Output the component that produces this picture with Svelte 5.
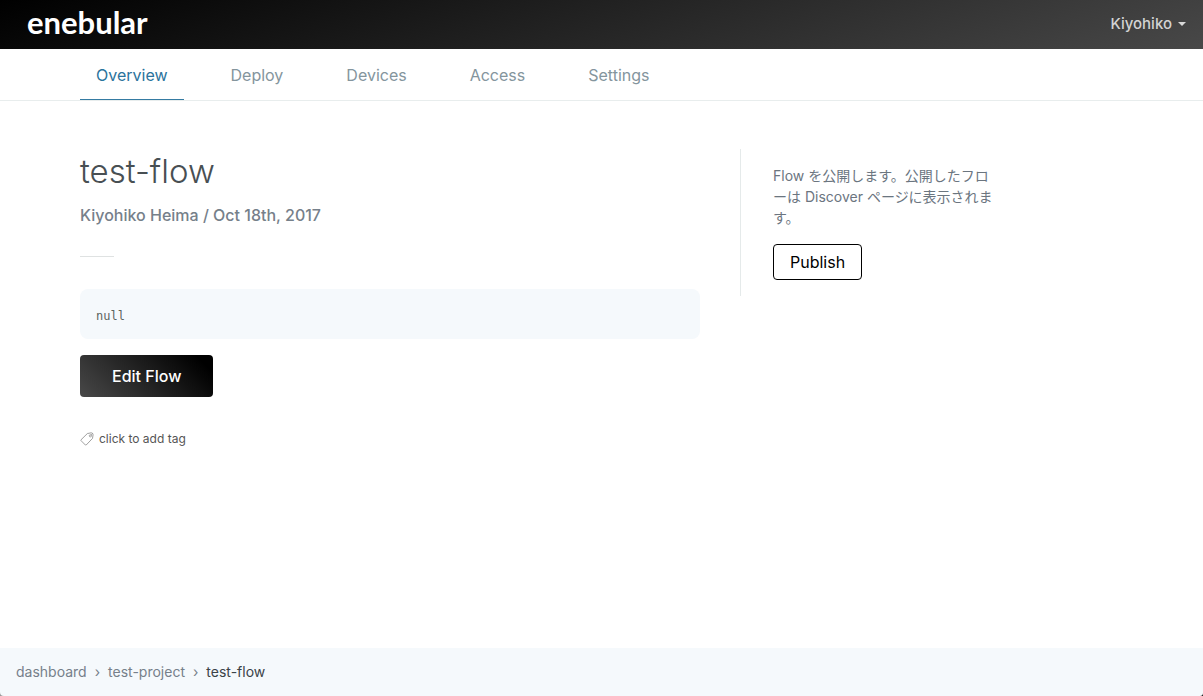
<script>
  const tabs = ['Overview', 'Deploy', 'Devices', 'Access', 'Settings'];
  let active = $state('Overview');
</script>

<div class="page">
  <header class="topbar">
    <a class="logo" href="#home">enebular</a>
    <button class="user" type="button">Kiyohiko <span class="caret"></span></button>
  </header>

  <nav class="tabs" aria-label="Project">
    {#each tabs as tab}
      <a
        href={'#' + tab.toLowerCase()}
        class:active={tab === active}
        onclick={() => (active = tab)}>{tab}</a>
    {/each}
  </nav>

  <main class="content">
    <section class="flow">
      <h1>test-flow</h1>
      <p class="meta">Kiyohiko Heima / Oct 18th, 2017</p>
      <hr />
      <pre>null</pre>
      <button class="edit" type="button">Edit Flow</button>
      <button class="tag" type="button">
        <svg viewBox="0 0 14 14" width="14" height="14" fill="none" stroke="currentColor" stroke-linejoin="round" aria-hidden="true">
          <path d="M7.3 1.6 11.2 .8 Q13 .9 13.1 2.7 L12.5 6.4 6.2 13 Q5.8 13.3 5.4 13 L1 8.6 Q.7 8.2 1 7.8Z" stroke-width=".8" />
          <circle cx="10.4" cy="3.8" r="1.1" stroke-width=".7" />
          <path d="M10.6 3.6 12.6 1.4" stroke-width=".7" />
        </svg>
        click to add tag
      </button>
    </section>

    <aside>
      <p lang="ja">Flow を公開します。公開したフローは Discover ページに表示されます。</p>
      <button class="publish" type="button">Publish</button>
    </aside>
  </main>

  <div class="bottom">
    <footer>
      <a href="#dashboard">dashboard</a>
      <span>›</span>
      <a href="#test-project">test-project</a>
      <span>›</span>
      <a href="#test-flow" class="current">test-flow</a>
    </footer>
  </div>
</div>

<style>
  .page {
    min-height: 100vh;
    display: flex;
    flex-direction: column;
    background: #fff;
    color: #484f53;
    font-family: Inter, "Noto Sans CJK JP", sans-serif;
    font-size: 16px;
  }
  button {
    font: inherit;
    border: 0;
    padding: 0;
    background: none;
    cursor: pointer;
  }
  a {
    color: inherit;
    text-decoration: none;
  }
  .topbar {
    padding: 0 17px 0 27px;
    display: flex;
    align-items: flex-start;
    justify-content: space-between;
    background: linear-gradient(160deg, #000, #484848);
  }
  .logo {
    padding-bottom: 5px;
    color: #fff;
    font-family: Lato, sans-serif;
    font-size: 31px;
    font-weight: 700;
    line-height: 44px;
  }
  .user {
    display: flex;
    align-items: center;
    gap: 6px;
    color: #d3d3d3;
    font-size: 15px;
    font-weight: 500;
    line-height: 48px;
  }
  .caret {
    border: 4px solid transparent;
    border-top-color: #d8d8d8;
    border-bottom: 0;
  }
  .tabs {
    display: flex;
    gap: 31px;
    padding: 0 80px;
    border-bottom: 1px solid #e8eded;
  }
  .tabs a {
    padding: 2px 16px 0;
    border-bottom: 1px solid transparent;
    color: #84959d;
    font-weight: 400;
    line-height: 48px;
  }
  .tabs a.active {
    color: #2b739c;
    border-bottom-color: #357ba2;
  }
  .content {
    flex: 1;
    display: flex;
    align-items: flex-start;
    gap: 40px;
    padding: 48px 80px;
  }
  .flow {
    flex: 0 1 620px;
    display: flex;
    flex-direction: column;
    align-items: flex-start;
  }
  h1 {
    margin: 0;
    font-size: 33px;
    font-weight: 300;
    line-height: 44px;
  }
  .meta {
    margin: 11px 0 0;
    color: #76808a;
    font-weight: 500;
    line-height: 22px;
  }
  hr {
    width: 34px;
    height: 1px;
    margin: 30px 0 32px;
    border: 0;
    background: #dfe2e2;
  }
  pre {
    align-self: stretch;
    margin: 0;
    padding: 18px 16px 14px;
    border-radius: 8px;
    background: #f5f9fc;
    color: #5c655f;
    font-family: "DejaVu Sans Mono", monospace;
    font-size: 12px;
    line-height: 18px;
  }
  .edit {
    margin-top: 16px;
    padding: 0 32px;
    border-radius: 4px;
    background: linear-gradient(45deg, #484848, #000 90%);
    color: #fff;
    font-weight: 500;
    line-height: 42px;
  }
  .tag {
    display: flex;
    align-items: center;
    gap: 5px;
    margin-top: 32px;
    color: #555;
    font-size: 12px;
    line-height: 20px;
  }
  .tag svg {
    color: #888;
  }
  aside {
    flex: 0 1 224px;
    padding: 16px 0 16px 32px;
    border-left: 1px solid #e5eaea;
  }
  aside p {
    margin: 0 0 16px;
    color: #6b757f;
    font-size: 14px;
    font-weight: 400;
    line-height: 21px;
  }
  .publish {
    padding: 0 16px;
    border: 1px solid #000;
    border-radius: 4px;
    color: #000;
    line-height: 34px;
  }
  .bottom {
    background: linear-gradient(to right, #999, #111);
  }
  footer {
    display: flex;
    gap: 8px;
    padding: 0 16px;
    border-radius: 0 0 3px 4px;
    background: #f5f9fc;
    color: #76808a;
    font-size: 14px;
    line-height: 48px;
  }
  footer .current {
    color: #3b4348;
  }
  :global(body) {
    margin: 0;
  }
</style>
